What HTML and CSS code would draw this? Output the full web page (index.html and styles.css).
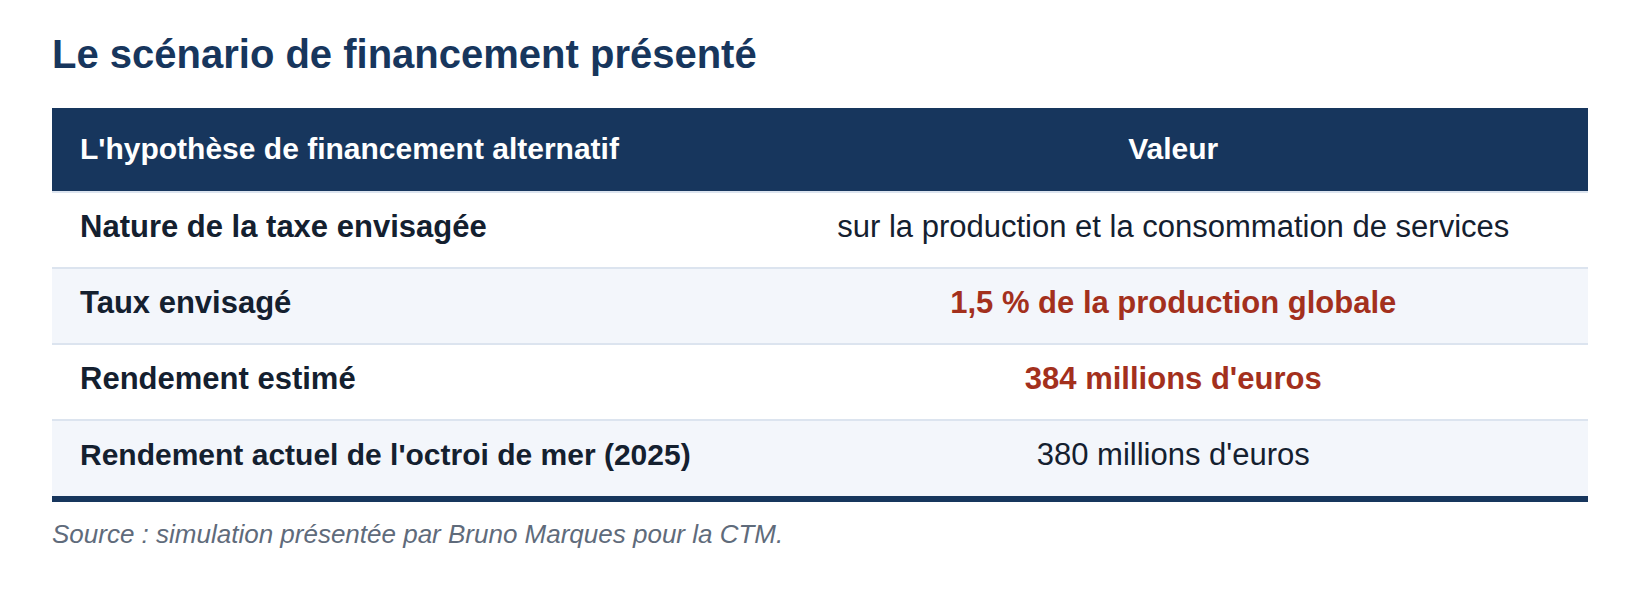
FILE: index.html
```html
<!DOCTYPE html>
<html lang="fr">
<head>
<meta charset="utf-8">
<title>Le scénario de financement présenté</title>
<link rel="stylesheet" href="styles.css">
</head>
<body>
<main class="page">
  <h2 class="title">Le scénario de financement présenté</h2>
  <table class="fin-table">
    <thead>
      <tr>
        <th class="col-label">L'hypothèse de financement alternatif</th>
        <th class="col-value">Valeur</th>
      </tr>
    </thead>
    <tbody>
      <tr>
        <td class="col-label">Nature de la taxe envisagée</td>
        <td class="col-value">sur la production et la consommation de services</td>
      </tr>
      <tr>
        <td class="col-label">Taux envisagé</td>
        <td class="col-value highlight">1,5 % de la production globale</td>
      </tr>
      <tr>
        <td class="col-label">Rendement estimé</td>
        <td class="col-value highlight">384 millions d'euros</td>
      </tr>
      <tr>
        <td class="col-label col-label-long">Rendement actuel de l'octroi de mer (2025)</td>
        <td class="col-value">380 millions d'euros</td>
      </tr>
    </tbody>
  </table>
  <p class="source">Source : simulation présentée par Bruno Marques pour la CTM.</p>
</main>
</body>
</html>
```

FILE: styles.css
```css
* {
  box-sizing: border-box;
}

body {
  margin: 0;
  background: #ffffff;
  font-family: "Liberation Sans", Arial, sans-serif;
}

.page {
  padding: 0 52px;
}

.title {
  margin: 31px 0 0;
  font-size: 40px;
  line-height: 46px;
  font-weight: 700;
  color: #17365d;
}

.fin-table {
  width: 100%;
  margin-top: 31px;
  border-collapse: collapse;
  border-bottom: 6px solid #17365d;
}

.fin-table th {
  background: #17365d;
  color: #ffffff;
  font-size: 30px;
  line-height: 36px;
  font-weight: 700;
  padding: 23px 28px 24px;
  text-align: left;
  border-bottom: 2px solid #dce4ef;
}

.fin-table th.col-value {
  text-align: center;
}

.fin-table th.col-label {
  width: 46%;
}

.fin-table td {
  font-size: 31px;
  line-height: 36px;
  padding: 16px 28px 22px;
  color: #14202f;
  border-bottom: 2px solid #dce4ef;
}

.fin-table tbody tr:nth-child(even) td {
  background: #f3f6fb;
}

.fin-table tbody tr:last-child td {
  padding-bottom: 23px;
  border-bottom: 6px solid #17365d;
}

.fin-table td.col-label {
  font-weight: 700;
}

.fin-table td.col-label-long {
  font-size: 30px;
}

.fin-table td.col-value {
  text-align: center;
}

.fin-table td.highlight {
  color: #a3301d;
  font-weight: 700;
}

.source {
  margin: 17px 0 0;
  font-size: 26px;
  font-style: italic;
  color: #5f6b7b;
}
```
